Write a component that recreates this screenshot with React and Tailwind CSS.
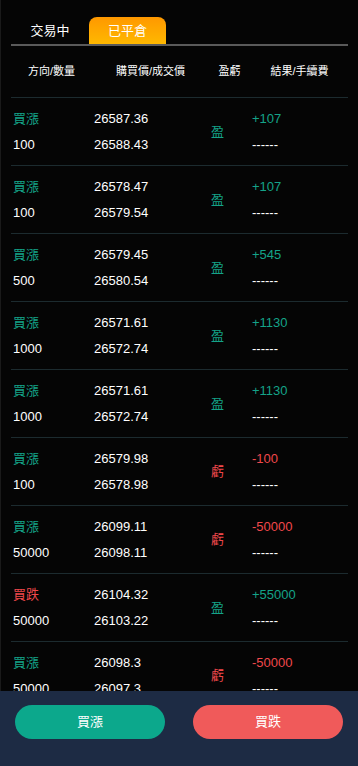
import React, { useState } from "react";

const rows = [
  { dir: "買漲", qty: "100", buy: "26587.36", deal: "26588.43", win: true, result: "+107" },
  { dir: "買漲", qty: "100", buy: "26578.47", deal: "26579.54", win: true, result: "+107" },
  { dir: "買漲", qty: "500", buy: "26579.45", deal: "26580.54", win: true, result: "+545" },
  { dir: "買漲", qty: "1000", buy: "26571.61", deal: "26572.74", win: true, result: "+1130" },
  { dir: "買漲", qty: "1000", buy: "26571.61", deal: "26572.74", win: true, result: "+1130" },
  { dir: "買漲", qty: "100", buy: "26579.98", deal: "26578.98", win: false, result: "-100" },
  { dir: "買漲", qty: "50000", buy: "26099.11", deal: "26098.11", win: false, result: "-50000" },
  { dir: "買跌", qty: "50000", buy: "26104.32", deal: "26103.22", win: true, result: "+55000" },
  { dir: "買漲", qty: "50000", buy: "26098.3", deal: "26097.3", win: false, result: "-50000" },
];

const font = { fontFamily: '"Liberation Sans", "Noto Sans CJK TC", sans-serif' };

const App = () => {
  const [tab, setTab] = useState(1);

  return (
    <div
      className="min-h-screen bg-[#050505] text-white border-l border-[#1a1a1a] pb-[76px]"
      style={font}
    >
      <div className="px-[10px] pt-[17px]">
        <div className="flex items-end border-b-2 border-[#5a5a5a] h-[29px]">
          <button
            className={`w-[78px] h-[27px] text-[13px] ${tab === 0 ? "rounded-t-lg bg-gradient-to-b from-[#ff9800] to-[#ffb800]" : ""}`}
            onClick={() => setTab(0)}
          >
            交易中
          </button>
          <button
            className={`w-[77px] h-[27px] text-[13px] ${tab === 1 ? "rounded-t-lg bg-gradient-to-b from-[#ff9800] to-[#ffb800]" : ""}`}
            onClick={() => setTab(1)}
          >
            已平倉
          </button>
        </div>

        <div className="grid grid-cols-[81px_117px_41px_99px] h-[52px] items-center text-[11px] border-b border-[#1c2b2f]">
          <div className="text-center">方向/數量</div>
          <div className="text-center">購買價/成交價</div>
          <div className="text-center">盈虧</div>
          <div className="text-center">結果/手續費</div>
        </div>

        {rows.map((r, i) => (
          <div
            key={i}
            className="grid grid-cols-[81px_117px_41px_99px] pt-2 pb-[7px] text-[13px] border-b border-[#1c2b2f]"
          >
            <div className="pl-[2px]">
              <div className={`h-[26px] leading-[26px] ${r.dir === "買漲" ? "text-[#14a388]" : "text-[#f0484b]"}`}>
                {r.dir}
              </div>
              <div className="h-[26px] leading-[26px]">{r.qty}</div>
            </div>
            <div className="pl-[2px]">
              <div className="h-[26px] leading-[26px]">{r.buy}</div>
              <div className="h-[26px] leading-[26px]">{r.deal}</div>
            </div>
            <div className={`pl-[2px] flex items-center ${r.win ? "text-[#14a388]" : "text-[#f0484b]"}`}>
              {r.win ? "盈" : "虧"}
            </div>
            <div className="pl-[2px]">
              <div className={`h-[26px] leading-[26px] ${r.win ? "text-[#14a388]" : "text-[#f0484b]"}`}>
                {r.result}
              </div>
              <div className="h-[26px] leading-[26px]">------</div>
            </div>
          </div>
        ))}
      </div>

      <div className="fixed bottom-0 left-0 right-0 h-[75px] bg-[#1d2b44] flex justify-between px-[15px] pt-[14px]">
        <button className="w-[150px] h-[34px] rounded-full bg-[#0ca88c] text-[13px] text-white">
          買漲
        </button>
        <button className="w-[150px] h-[34px] rounded-full bg-[#f05a5a] text-[13px] text-white">
          買跌
        </button>
      </div>
    </div>
  );
};

export default App;
